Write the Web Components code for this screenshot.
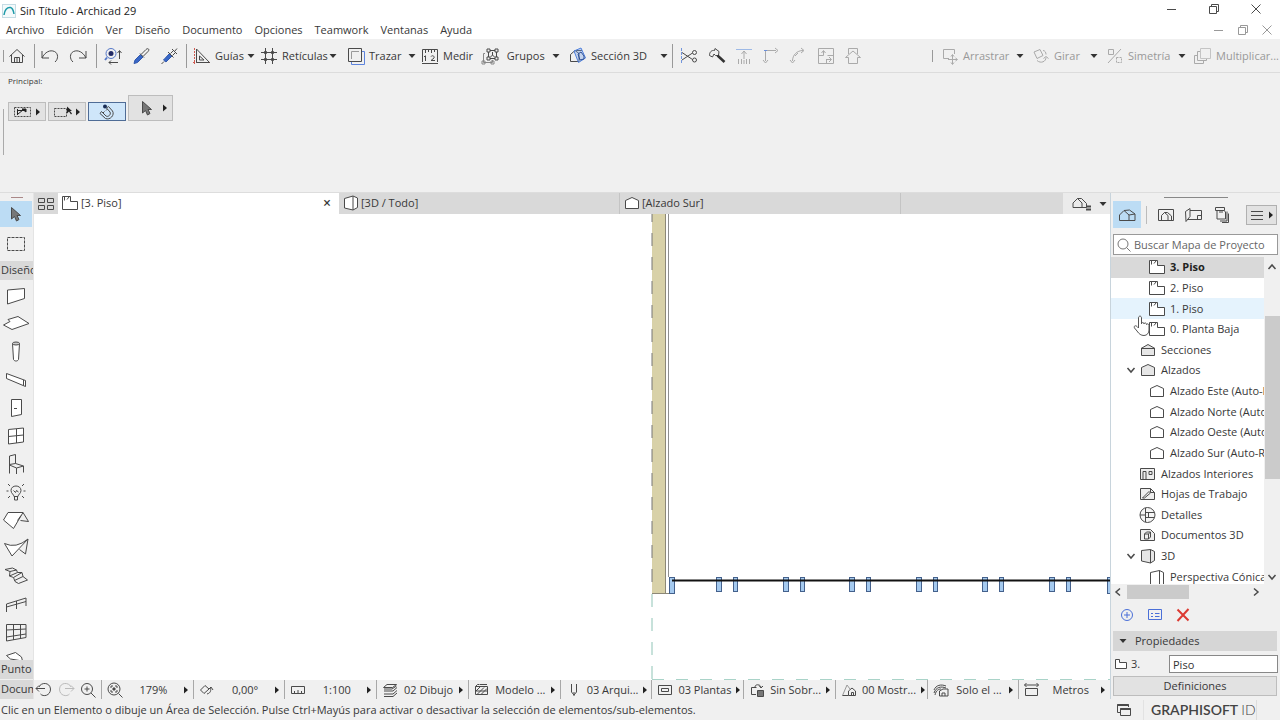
<!DOCTYPE html>
<html lang="es">
<head>
<meta charset="utf-8">
<title>Sin Título - Archicad 29</title>
<style>
  html, body { margin: 0; height: 100%; }
  body {
    font: 11px/16px "Open Sans", "Noto Sans", sans-serif;
    color: #383838;
    background: #f0f0f0;
    --panel: #f0f0f0;
    --bar: #d9d9d9;
    --accent: #bcdcf4;
    --line: #b4b4b4;
    --ink: #4a4a4a;
  }
</style>
</head>
<body>
<ac-app></ac-app>

<script>
/* Icon set: [width, height, svg content] */
const ICONS = {
  logo: [14, 14, '<rect x=".5" y=".5" width="13" height="13" fill="#f4fafb" stroke="#c5dce4"/><path d="M2 11C2.500 6 5 3 8.500 3.500C11 4 11.500 7 12 10" stroke="#1d9aa8" stroke-width="1.500"/>'],
  min: [12, 12, '<path d="M1 6.500h9"/>'],
  restore: [12, 12, '<path d="M1.500 3.500h7v7h-7zM3.500 3.500v-2h7v7h-2"/>'],
  close: [12, 12, '<path d="M1.500 1.500l9 9M10.500 1.500l-9 9"/>'],
  home: [18, 18, '<path d="M1.500 9.500L9 2.500l7.500 7M3.500 8v7.500h11V8M6.500 15.500v-5h5v5M9 10.500v5"/>'],
  undo: [20, 16, '<path d="M2 3v7h7M2 10C5 4 10 1.500 14.500 3.500C18.500 5.500 18.500 11 15 14"/>'],
  redo: [20, 16, '<path d="M18 3v7h-7M18 10C15 4 10 1.500 5.500 3.500C1.500 5.500 1.500 11 5 14"/>'],
  find: [18, 18, '<circle cx="7" cy="6.500" r="5" stroke="#5578c8"/><circle cx="7" cy="6.500" r="2.500" fill="#222b66" stroke="none"/><path d="M3 10.500L1 13" stroke="#5578c8" stroke-width="2"/><path d="M15.500 4v8M13.500 6l2-2.500l2 2.500M5 15.500h9M7 13.500l-2 2l2 2"/>'],
  dropper: [18, 18, '<path d="M2 16.500L3 13L8.500 7.500L11 10L5.500 15.500Z" fill="#3867c7" stroke="#3158ad"/><path d="M8 6.500l4 4M9.500 7L14 2.500C16 .5 18 2.500 16 4.500L11.500 9"/>'],
  syringe: [18, 18, '<path d="M1.500 17L4 14.500" /><path d="M3.500 13L9.500 6.500L12 9L6 15Z" fill="#3867c7" stroke="#3158ad"/><path d="M8 5l5.500 5.500M10.500 6.500l3-3l2 2l-3 3M12 2l5 5M14.500 4.500l2.500-3"/>'],
  guides: [20, 18, '<path d="M2.500 1v16M1 15.500h18" stroke="#cf5a50" stroke-dasharray="2 1"/><path d="M4.500 2v13.500h13ZM7.500 9v4h4.500z"/>'],
  grid: [18, 18, '<path d="M5.500 1v16M12.500 1v16M1 5.500h16M1 12.500h16" stroke-width="1"/><path d="M4 5.500h3M11 5.500h3M4 12.500h3M11 12.500h3M5.500 4v3M5.500 11v3M12.500 4v3M12.500 11v3" stroke-width="2"/>'],
  trace: [18, 18, '<path d="M4.500 15v2.500h13V4.500H15" stroke="#5d83dc"/><path d="M1.500 1.500h13v13h-13z"/><path d="M4.500 12V4.500H12" stroke="#9a9a9a"/>'],
  measure: [18, 16, '<path d="M1.500 14V1.500h15V14M1 15.500h16M4.500 2v3M7.500 2v2M10.500 2v3M13.500 2v2M4.500 8v5M3 9l1.500-1.500M10 8.500c1-1.500 4-.5 3 1.500l-3 2.500h4"/>'],
  group: [20, 18, '<path d="M7.500 3.500h8v8h-8z"/><path d="M4 6.500H2.500v9h9V13" stroke="#888"/><path d="M6 2h3v3H6zM14 2h3v3h-3zM6 10h3v3H6zM14 10h3v3h-3zM11.500 5v3l-2 2M11.500 8l2 2" fill="#f0f0f0"/><path d="M1 14h3v3H1zM10 14h3v3h-3z" stroke="#888"/>'],
  section: [18, 18, '<path d="M1.500 14.500v-7L6 3.500l4 3v8zM6 3.500h7"/><path d="M5 4L12 1L16.500 11L9.500 15.500Z" fill="#6f9fec" fill-opacity=".35" stroke="#4f80dc"/><path d="M9 7l3-2l3 4v3l-4 1z" stroke="#2d4f96"/>'],
  cut: [18, 18, '<path d="M1.500 1v16" stroke="#7295dc" stroke-dasharray="3 1"/><path d="M2 5.500l10.500 7M2 13l10.500-7"/><circle cx="14.500" cy="5.500" r="2"/><circle cx="14.500" cy="13" r="2"/>'],
  axe: [18, 18, '<path d="M1.500 8.500C1.500 5 3.500 3 6.500 3.500L7 1.500L11 4.500L10.500 8.500L7.500 8.500L6 7L4.500 10Z"/><path d="M9.500 8.500l7 6.500" stroke-width="2.500" stroke="#333"/>'],
  adjust: [18, 18, '<path d="M1 2.500h16" stroke="#9db9e6"/><path d="M9 4v8M6.500 7L9 4l2.500 3M3.500 12v5M6.500 12v5M9 13v4M11.500 12v5M14.500 12v5"/>'],
  corner: [18, 18, '<path d="M3.500 14V3.500H14"/><path d="M1 13l2.500 3L6 13M13 1l3 2.500L13 6" /><path d="M2 3.500h3" stroke="#6b90dc"/>'],
  fillet: [18, 18, '<path d="M3.500 14C3.500 8 8 3.500 14 3.500"/><path d="M1 13l2.500 3L6 13M12 1l3 2.500L12 6M6 9l3-3"/>'],
  resize: [18, 18, '<path d="M1.500 1.500h15v15h-15z"/><path d="M6.500 4v4.500H1.500M4.500 6l2-2.500l2 2.500M9 12.500h5M12 10l2.500 2.500L12 15M9.500 16.500v-4M16.500 8.500h-6"/>'],
  house: [18, 18, '<path d="M1.500 10.500L9 4l7.500 6.500h-3v6h-9v-6z"/><path d="M4.500 7V1.500h9V7"/>'],
  drag: [18, 18, '<path d="M8 11.500H2.500v-9h11V7"/><path d="M11.500 8v9M7 12.500h9M10 9.500l1.500-2l1.500 2M10 15.500l1.500 2l1.500-2M14.500 11l2 1.500l-2 1.500"/>'],
  rotate: [18, 18, '<path d="M2 5L8 2.500L11 8.500L5 11.500Z"/><path d="M5 13.500c4 3.500 9 1 9-3M11.500 11.500l2.500-2l2.500 2M11 3.500c2 0 3 2 3 4"/>'],
  mirror: [18, 18, '<path d="M2 16L15 2M2.500 2.500h5v5h-5z"/><path d="M10.500 10.500h5v5h-5z" stroke-dasharray="2 1"/>'],
  multiply: [20, 18, '<path d="M7.500 1.500h10v10h-10z" stroke="#c4c4c4"/><path d="M7 4.500H4.500v9h9V12M4 8.500H1.500v8h9V14"/>'],
  pickA: [20, 12, '<path d="M1.500 1.500h16v9h-16z" stroke-dasharray="2 1"/><path d="M4.500 3v6M4 4.500h9" stroke="#222"/><path d="M5 8l5-4M9 3h4v3z" stroke="#222" fill="#222"/>'],
  pickB: [20, 12, '<path d="M1.500 2.500h12v8h-12z" stroke-dasharray="2 1"/><path d="M14 .5v7l2-2l2 3l1-1l-2-2.500h2z" fill="#222" stroke="none"/>'],
  magnet: [18, 16, '<path d="M3.500 7.500L8 12C10 13.500 13.500 10.500 12 8L8.500 4L10.500 2.500L14.500 7C17 11 12 16.500 7.500 14.500L2 9.500zM8 6.500l1.500-1.500M5 9l1.500-1.500"/><circle cx="7" cy="2.500" r="2" fill="#182c55" stroke="none"/>'],
  arrow: [12, 16, '<path d="M1.500 1.500V13l3-2.500l2 4.500l2.500-1.500l-2-4h3.500z" fill="#777"/>'],
  marquee: [20, 16, '<path d="M1.500 1.500h17v13h-17z" stroke-dasharray="3 1"/>'],
  quad: [18, 14, '<path d="M1.500 1.500h6v4h-6zM10.500 1.500h6v4h-6zM1.500 8.500h6v4h-6zM10.500 8.500h6v4h-6z"/>'],
  story: [18, 16, '<path d="M1.500 1.500h8v5h7v8h-15z" fill="#fff"/><path d="M3.500 2v3.500M6 4.500L8 2"/>'],
  cube: [16, 16, '<path d="M1.500 3.500L10 1l4.500 2v9.500L10 15l-8.500-2zM10 1v14" fill="#fff"/>'],
  elev: [16, 14, '<path d="M1.500 12.500v-8L8 1.500l6.500 3v8z" fill="#fff"/>'],
  elevg: [16, 14, '<path d="M1.500 12.500v-8L8 1.500l6.500 3v8z" fill="#e6e6e6"/>'],
  sect: [16, 14, '<path d="M1.500 12.500v-7h13v7zM1 5.500L8 1.500l7 4z" fill="#e6e6e6"/>'],
  interior: [17, 14, '<path d="M1.500 1.500h14v11h-14z" fill="#eee"/><path d="M4 12V4.500h3V12M10 4.500h3v3h-3z"/>'],
  worksheet: [17, 14, '<path d="M1.500 1.500h10l4 4v7h-14z" fill="#eee"/><path d="M3.500 11L10 4.500l1.500 1.500l-6 5zM11.500 1.500v4h4"/>'],
  detail: [17, 18, '<circle cx="8.500" cy="9" r="7.500" fill="#f4f4f4"/><path d="M6.500 2v14M6.500 6.500H15M6.500 11.500H15M9.500 6.500v5M1 9h5"/>'],
  doc3d: [17, 14, '<path d="M1.500 1.500h10l4 4v7h-14z" fill="#eee"/><path d="M5.500 6v5h4V6zM5.500 6l2-2h4v5l-2 2M9.500 6l2-2"/>'],
  cubeg: [16, 16, '<path d="M1.500 2.500l9-1l4 2v9l-4 2.500l-9-2zM10.500 1.500V15" fill="#e6e6e6"/>'],
  persp: [16, 16, '<path d="M1.500 15V3.500l9-2V15M10.500 1.500l4 2V15" fill="#fff"/>'],
  map: [20, 16, '<path d="M2.500 13.500V8L7 3.500l5 4.500v5.500zM7 3.500L12.500 3L18 7v6.500h-6M12 8l6-1"/>'],
  viewmap: [18, 16, '<path d="M1.500 2.500h15v11h-15z"/><path d="M4.500 13V8.500L7.500 5.500l3.500 3V13M7.500 5.500h3L14.500 9v4"/>'],
  layoutbook: [20, 16, '<path d="M2 14.500L1.500 4.500L6 1.500v8L2 14.500M6 3.500h11.500v9H3.500M13.500 12.500v-4h4"/>'],
  publisher: [18, 18, '<path d="M2.500 1.500h9v3h-9zM4 4.500v8.500h8.500V6L11 4.500M6 6h4M14 5.500v9.500H7M15.500 7.500v9H9"/>'],
  mapset: [22, 16, '<path d="M2 11.500V7l4.500-4.500L11 7v4.500zM6.500 2.500h4l5 5v4H11"/><path d="M15 10.500h5M15 13.500h5" stroke-width="2"/>'],
  lines: [14, 12, '<path d="M1 2.500h12M1 6.500h12M1 10.500h12"/>'],
  search: [14, 14, '<circle cx="6" cy="6" r="5"/><path d="M9.500 9.500l4 4"/>'],
  chevron: [10, 8, '<path d="M1.500 2l3.500 4l3.500-4" stroke-width="1.500"/>'],
  up: [10, 8, '<path d="M1.500 6L5 2l3.500 4" stroke-width="1.500"/>'],
  left: [8, 10, '<path d="M6 1.500L2 5l4 3.500" stroke-width="1.500"/>'],
  right: [8, 10, '<path d="M2 1.500L6 5L2 8.500" stroke-width="1.500"/>'],
  plus: [14, 14, '<circle cx="7" cy="7" r="5.500" stroke="#4a6fd8"/><path d="M7 4v6M4 7h6" stroke="#4a6fd8"/>'],
  props: [16, 14, '<path d="M1.500 1.500h13v10h-13zM4 5.500h2M8 5.500h4.500M4 8.500h2M8 8.500h4.500" stroke="#4a6fd8"/>'],
  del: [14, 14, '<path d="M1.500 1.500l11 11M12.500 1l-11 12" stroke="#dc3a32" stroke-width="2"/>'],
  folder: [14, 12, '<path d="M1.500 1.500h4v3h7v6h-11z" fill="#fff"/>'],
  windows: [18, 14, '<path d="M5 9.500H2.500v-8h11V4" /><path d="M5.500 5.500h10v7h-10z" fill="#f0f0f0"/><path d="M2.500 2h11M5.500 6h10" stroke-width="2"/>'],
  dot: [6, 8, '<path d="M1 .5v7l4-3.500z" fill="#222" stroke="none"/>'],
  drop: [8, 6, '<path d="M.5 1h7L4 5z" fill="#333" stroke="none"/>'],
  wall: [28, 24, '<path d="M5.500 6L22.500 4.500v10L5.500 20z" fill="#fff"/>'],
  slab: [28, 24, '<path d="M1.500 13L8 9.500l-2-2L16 4.500l11 7L10 17.500z" fill="#fff"/>'],
  column: [28, 24, '<path d="M10.500 3.500l1 16c1 2 4 2 5 0l1-16" fill="#fff"/><ellipse cx="14" cy="3.500" rx="3.500" ry="1.500" fill="#ccc"/>'],
  beam: [28, 24, '<path d="M4.500 5.500L23.500 12.500v6L4.500 10.500zM21.500 12v5.500" fill="#fff"/>'],
  door: [28, 24, '<path d="M9.500 3.500h10v15l-10 2z" fill="#fff"/><path d="M12 12.500h3"/>'],
  window: [28, 24, '<path d="M6.500 5.500L21.500 4v14L6.500 20zM14.500 5v14M6.500 12.500L21.500 11" fill="#fff"/>'],
  chair: [28, 24, '<path d="M7.500 21.500V4l6-1.500v9M7.500 12.500l6-1L21.500 14v6.500M7.500 13l7 3l7-2M14.500 16v6"/>'],
  lamp: [28, 24, '<path d="M12 16.500c0-2-3-3-3-6c0-6 10-6 10 0c0 3-3 4-3 6zM12.500 17v3h3v-3M11.500 10.500l2 2l1-2l2 1.500M6 4l2 2M22 4l-2 2M4.500 11h2M21.500 11h2M6 18l2-2M22 18l-2-2"/>'],
  roof: [28, 24, '<path d="M1.500 12L6 4.500h15L11.500 20.500z" fill="#fff"/><path d="M21 4.500l5.500 9l-8-1M19 7.500l-3.500 5"/>'],
  shell: [28, 24, '<path d="M2.500 7.500Q14 13 26 3L10 20z" fill="#fff"/><path d="M26 3L23.500 18L17.500 13.500"/>'],
  stair: [28, 24, '<path d="M3 5.500l7.500-1.500l4 2l1 2.500h4.500l1 4l4.500 3.500l-9 3.500l-3.500-2l-1.500-4l-4-1.500l.5-4.500zM8 7.500l6.500-1.500M7.500 12l8-3.500M11.500 13.500l8.500-5M12.500 16.500l8.500-4"/>'],
  rail: [28, 24, '<path d="M4.500 20v-8L24 6v8M4.500 15L24 9.500M14.500 9v8"/>'],
  curtain: [28, 24, '<path d="M4.500 4.500H24v13L4.500 21zM4.500 10L24 9M4.500 17L24 14M11.500 5v15M18.500 5v14"/>'],
  morph: [28, 24, '<path d="M4.500 7.500l9-3l6 4.500l1 4l-12-2z" fill="#fff"/>'],
  zback: [18, 18, '<path d="M1 7.500h9M4 4.500l-3 3l3 3M4 6C6 1 15 1 15.500 8C15.500 15 8 16 5.500 13"/>'],
  znext: [18, 18, '<path d="M17 7.500H8M14 4.500l3 3l-3 3M14 6C12 1 3 1 2.500 8C2.500 15 10 16 12.500 13"/>'],
  zin: [18, 18, '<circle cx="8" cy="8" r="5.500"/><path d="M8 5.500v5M5.500 8h5M12 12l4.500 4.500"/>'],
  zfit: [18, 18, '<circle cx="8" cy="8" r="6"/><path d="M5 7V5h2M9 5h2v2M11 9v2H9M7 11H5V9M12.500 12.500l4 4"/><path d="M7 7h2v2H7z" fill="#444"/>'],
  orient: [16, 14, '<path d="M1.500 7L6 2.500L10 6L5 10.500zM8 11c4-1 4-4 3.500-6M9.500 6.500L12 4l2 3"/>'],
  scale: [16, 12, '<path d="M1.500 2.500h13v7h-13zM4.500 7v2M8 6v3M11.500 7v2"/>'],
  layers: [16, 16, '<path d="M5 2.500h9.500l-4 3H1.500zM2 9l9 0l4-3.500M2 12h9l4-3.500M2 14.500h9l4-3.500M2 7h8l4.500-3"/>'],
  hatch: [16, 14, '<path d="M1.500 3.500h12v8h-12zM1.500 3.500l2-2h2M6 1.500h7M2 8l4-4M3 11.500l7-7M7 11.500l6-6M2 8h11"/>'],
  pen: [12, 16, '<path d="M3.500 2v8l2.500 3l2.500-3V2M6 10v4"/>'],
  frame: [16, 12, '<path d="M1.500 1.500h13v9h-13zM4.500 4.500h7v3h-7z"/>'],
  override: [16, 16, '<path d="M7 12.500H2.500v-7h5M6 5c0-3 5-3 6 0M10 3.500L12 6l2-2"/><path d="M8.500 8.500h6v6h-6z" fill="#777"/>'],
  reno: [16, 16, '<path d="M1.500 13.500L6 3l3 4" stroke="#999"/><path d="M1.500 13.500h6M7.500 13.500V9l3.500-3l3.500 3v4.500zM10.500 13.500v-3h2v3"/>'],
  design: [18, 16, '<path d="M2 8C4 3 9 2 14 4M2 11C4 5 9 4 14 6M3 13C4 8 7 7 9 7"/><path d="M7.500 14V9L11 7h5v7zM10 14v-3h3v3"/>'],
  units: [18, 16, '<path d="M2.500 6.500h12v7h-12zM1.500 3h14M3.500 1l-2 2l2 2M13.500 1l2 2l-2 2"/>'],
  hand: [18, 22, '<path d="M5.500 13V3c0-2.500 3-2.500 3 0v6c0-2 2.500-2 2.500 0c0-1.500 2.500-1.500 2.500.5c0-1 2.500-1 2.500 1V15c0 3-2 5.500-5 5.500S6 19 4 16L1.500 13c-1-2 1-3 2.500-1.500z" fill="#fff" stroke="#555"/>']
};

/* Base element: renders its shadow markup once it is attached */
class Part extends HTMLElement {
  connectedCallback() {
    if (this.shadowRoot) return;
    this.attachShadow({ mode: 'open' }).innerHTML =
      `<style>*{box-sizing:border-box}
        button{font:inherit;color:inherit;background:none;border:0;padding:0;margin:0;white-space:nowrap}
        :host{display:block}${this.css()}</style>${this.html()}`;
  }
  css() { return ''; }
  html() { return '<slot></slot>'; }
  at(name) { return this.getAttribute(name) || ''; }
}

customElements.define('ac-icon', class extends Part {
  css() {
    return ':host{display:inline-block;flex:none;color:var(--icon,var(--ink))} svg{display:block}';
  }
  html() {
    const [w, h, body] = ICONS[this.at('name')];
    return `<svg width="${w}" height="${h}" viewBox="0 0 ${w} ${h}" fill="none" stroke="currentColor" aria-hidden="true">${body}</svg>`;
  }
});

customElements.define('ac-titlebar', class extends Part {
  css() {
    return `:host{background:#fff;color:#222}
      header{display:flex;align-items:center;height:21px;padding:0 18px 0 2px;gap:4px}
      h1{font:inherit;margin:0;flex:1}
      .win{display:flex;gap:30px}`;
  }
  html() {
    return `<header><ac-icon name="logo"></ac-icon><h1>Sin Título - Archicad 29</h1>
      <div class="win">${['min:Minimizar', 'restore:Restaurar', 'close:Cerrar'].map(s => {
        const [i, l] = s.split(':');
        return `<button aria-label="${l}"><ac-icon name="${i}"></ac-icon></button>`;
      }).join('')}</div></header>`;
  }
});

customElements.define('ac-menubar', class extends Part {
  css() {
    return `:host{background:#fff}
      nav{display:flex;align-items:center;height:18px;padding:0 7px 0 6px;gap:12px}
      .win{display:flex;gap:12px;margin-left:auto;--icon:#999}
      .win button{display:flex}`;
  }
  html() {
    return `<nav>${['Archivo', 'Edición', 'Ver', 'Diseño', 'Documento', 'Opciones', 'Teamwork', 'Ventanas', 'Ayuda']
      .map(m => `<button>${m}</button>`).join('')}
      <div class="win"><button aria-label="Minimizar ventana"><ac-icon name="min"></ac-icon></button>
      <button aria-label="Restaurar ventana"><ac-icon name="restore"></ac-icon></button>
      <button aria-label="Cerrar ventana"><ac-icon name="close"></ac-icon></button></div></nav>`;
  }
});

/* Toolbar command: icon, optional text, optional drop-down mark */
customElements.define('ac-tool', class extends Part {
  css() {
    return `:host{flex:none;width:var(--w,28px)}
      :host([off]){color:#999;--icon:#aaa}
      button{display:flex;align-items:center;width:100%;height:24px}
      .pic{display:flex;justify-content:center;width:26px;flex:none}
      .text{flex:1;text-align:left}
      .drop{padding-right:1px}
      :host([off]) .drop{padding-right:4px}`;
  }
  html() {
    const drop = this.hasAttribute('drop') ? '<ac-icon class="drop" name="drop"></ac-icon>' : '';
    return `<button aria-label="${this.at('label')}"><span class="pic"><ac-icon name="${this.at('icon')}"></ac-icon></span><span class="text"><slot></slot></span>${drop}</button>`;
  }
});

customElements.define('ac-toolbar', class extends Part {
  css() {
    return `:host{background:var(--panel);border-bottom:1px solid #dcdcdc}
      div{display:flex;align-items:center;height:33px;padding-left:3px}
      i{flex:none;width:1px;height:24px;background:#999}
      i.short{height:12px}
      .right{margin-left:auto}
      .m{--w:82px}.a{--w:67px}.g{--w:83px}.s{--w:104px}.t{--w:61px}.n{--w:74px}`;
  }
  html() {
    return `<div><i class="short"></i>
      <ac-tool icon="home" label="Inicio"></ac-tool><i style="margin:0 2px"></i>
      <ac-tool icon="undo" label="Deshacer"></ac-tool><ac-tool icon="redo" label="Rehacer"></ac-tool><i style="margin:0 3px"></i>
      <ac-tool icon="find" label="Buscar y seleccionar"></ac-tool><ac-tool icon="dropper" label="Recoger parámetros"></ac-tool><ac-tool icon="syringe" label="Inyectar parámetros"></ac-tool><i style="margin:0 2px"></i>
      <ac-tool class="a" icon="guides" label="Guías" drop>Guías</ac-tool>
      <ac-tool class="m" icon="grid" label="Retículas" drop>Retículas</ac-tool>
      <span style="width:5px"></span>
      <ac-tool class="n" icon="trace" label="Trazar" drop>Trazar</ac-tool>
      <ac-tool class="t" icon="measure" label="Medir">Medir</ac-tool>
      <ac-tool class="g" icon="group" label="Grupos" drop>&nbsp;Grupos</ac-tool>
      <span style="width:4px"></span>
      <ac-tool class="s" icon="section" label="Sección 3D" drop>Sección 3D</ac-tool><i style="margin:0 3px"></i>
      <ac-tool icon="cut" label="Dividir"></ac-tool>
      <ac-tool style="--w:27px" icon="axe" label="Ajustar"></ac-tool>
      <ac-tool off style="--w:27px" icon="adjust" label="Ajustar altura"></ac-tool>
      <ac-tool off style="--w:27px" icon="corner" label="Intersecar"></ac-tool>
      <ac-tool off icon="fillet" label="Empalme"></ac-tool>
      <ac-tool off style="--w:27px" icon="resize" label="Redimensionar"></ac-tool>
      <ac-tool off icon="house" label="Cubierta"></ac-tool>
      <i class="short right" style="margin-right:4px"></i>
      <ac-tool off style="--w:91px" icon="drag" label="Arrastrar" drop>Arrastrar</ac-tool>
      <ac-tool off class="n" icon="rotate" label="Girar" drop>Girar</ac-tool>
      <ac-tool off style="--w:88px" icon="mirror" label="Simetría" drop>Simetría</ac-tool>
      <ac-tool off style="--w:90px" icon="multiply" label="Multiplicar">Multiplicar...</ac-tool></div>`;
  }
});

customElements.define('ac-infobox', class extends Part {
  css() {
    return `:host{background:var(--panel);border-bottom:1px solid #ddd;height:120px;padding:0 8px}
      .title{font-size:8px;line-height:12px;padding:2px 0 8px}
      .row{display:flex;align-items:flex-end;gap:2px}
      button{display:flex;align-items:center;justify-content:space-between;width:38px;height:19px;padding:0 4px;
        background:#e2e2e2;border:1px solid #bdbdbd}
      .on{background:#cfe6fa;border-color:#4f6c96;justify-content:center}
      .big{width:45px;height:26px;padding-left:12px}
      .grip{width:1px;height:46px;background:#aaa;margin:-12px 0 0 -5px}`;
  }
  html() {
    return `<div class="title">Principal:</div>
      <div class="row"><button aria-label="Método de selección"><ac-icon name="pickA"></ac-icon><ac-icon name="dot"></ac-icon></button>
      <button aria-label="Área de selección"><ac-icon name="pickB"></ac-icon><ac-icon name="dot"></ac-icon></button>
      <button class="on" aria-label="Selección rápida" aria-pressed="true"><ac-icon name="magnet"></ac-icon></button>
      <button class="big" aria-label="Flecha"><ac-icon name="arrow"></ac-icon><ac-icon name="dot"></ac-icon></button></div>
      <div class="grip"></div>`;
  }
});

customElements.define('ac-toolbox', class extends Part {
  css() {
    return `:host{display:flex;flex-direction:column;width:34px;background:var(--panel);border-right:1px solid #e4e4e4;min-height:0}
      .grip{flex:none;width:12px;height:1px;margin:4px auto 3px;background:#a88}
      button{display:flex;flex:none;align-items:center;justify-content:center;width:32px;height:28px}
      .on{background:var(--accent);height:26px}
      .marquee{height:34px}
      .list{flex:1 1 0;min-height:0;overflow:hidden;padding-top:2px}
      h2{flex:none;font:inherit;margin:0;padding:1px;height:19px;overflow:hidden;white-space:nowrap;background:var(--bar)}
      h2+h2{margin-top:1px}`;
  }
  html() {
    const tools = { wall: 'Muro', slab: 'Forjado', column: 'Pilar', beam: 'Viga', door: 'Puerta', window: 'Ventana', chair: 'Objeto', lamp: 'Lámpara', roof: 'Cubierta', shell: 'Membrana', stair: 'Escalera', rail: 'Barandilla', curtain: 'Muro cortina', morph: 'Forma' };
    return `<div class="grip"></div>
      <button class="on" aria-label="Flecha"><ac-icon name="arrow"></ac-icon></button>
      <button class="marquee" aria-label="Área de selección"><ac-icon name="marquee"></ac-icon></button>
      <h2>Diseño</h2>
      <div class="list">${Object.entries(tools).map(([i, l]) => `<button aria-label="${l}"><ac-icon name="${i}"></ac-icon></button>`).join('')}</div>
      <h2>Punto</h2><h2>Docum</h2>`;
  }
});

customElements.define('ac-tabs', class extends Part {
  css() {
    return `:host{display:flex;height:21px;background:var(--bar)}
      .all{width:24px;display:flex;align-items:center;justify-content:center}
      .tab{display:flex;align-items:center;flex:0 1 281px;gap:2px;padding:0 8px 1px 4px;border-right:1px solid #c4c4c4}
      .tab.on{background:#fff;border:0;padding-left:3px}
      .tab b{margin-left:auto;font-size:14px;font-weight:600}
      .opt{margin-left:auto;width:47px;display:flex;align-items:center;justify-content:space-between;padding:0 3px 0 8px;background:#ebebeb}`;
  }
  html() {
    return `<button class="all" aria-label="Vista general de pestañas"><ac-icon name="quad"></ac-icon></button>
      <button class="tab on"><ac-icon name="story"></ac-icon><span>[3. Piso]</span><b>×</b></button>
      <button class="tab"><ac-icon name="cube"></ac-icon><span>[3D / Todo]</span></button>
      <button class="tab"><ac-icon name="elev"></ac-icon><span>[Alzado Sur]</span></button>
      <button class="opt" aria-label="Opciones de vista"><ac-icon name="mapset"></ac-icon><ac-icon name="drop"></ac-icon></button>`;
  }
});

/* Floor plan drawing */
customElements.define('ac-plan', class extends Part {
  css() { return ':host{background:#fff;overflow:hidden} svg{display:block;width:100%;height:100%}'; }
  html() {
    const posts = [];
    for (let i = 0; i < 6; i++) {
      const x = 682.5 + Math.round(i * 66.6);
      posts.push(`<rect x="${x}" y="363.500" width="5" height="14"/><rect x="${x + 17}" y="363.500" width="4" height="14"/>`);
    }
    return `<svg role="img" aria-label="Planta del piso 3">
      <rect x="618" y="0" width="14" height="379" fill="#d8d1a8"/>
      <path d="M631.500 0V379" stroke="#8c8877"/><path d="M634.500 0V363" stroke="#8f8f8f"/>
      <path d="M618 379.500H640" stroke="#8c8877"/>
      <path d="M618 0V379" stroke="#777" stroke-dasharray="13 11" stroke-dashoffset="5"/>
      <path d="M618 380V466" stroke="#8fc4b6" stroke-dasharray="13 11"/>
      <path d="M618 465.500H2000" stroke="#a9d3c8" stroke-dasharray="12 12"/>
      <g fill="#a5caef" stroke="#44618c">
        <rect x="635.500" y="363.500" width="5" height="16"/>${posts.join('')}
        <rect x="1073.500" y="363.500" width="6" height="16"/></g>
      <path d="M638 366.500H1076" stroke="#111" stroke-width="2"/>
    </svg>`;
  }
});

customElements.define('ac-option', class extends Part {
  css() {
    return `:host{flex:1 1 0;min-width:0;border-left:1px solid #a8a8a8}
      button{display:grid;grid-template-columns:26px 1fr 14px;align-items:center;justify-items:center;width:100%;height:19px}`;
  }
  html() {
    return `<button><ac-icon name="${this.at('icon')}"></ac-icon><span><slot></slot></span><ac-icon name="dot"></ac-icon></button>`;
  }
});

customElements.define('ac-quickbar', class extends Part {
  css() {
    return `:host{display:flex;align-items:center;height:19px;background:var(--panel)}
      .zoom{display:flex;flex:none;width:67px;gap:4px;padding-left:1px}
      .zoom button{display:flex}
      .dim{--icon:#bbb}`;
  }
  html() {
    const opts = [['zfit', '179%'], ['orient', '0,00°'], ['scale', '1:100'], ['layers', '02 Dibujo'], ['hatch', 'Modelo ...'], ['pen', '03 Arqui...'], ['frame', '03 Plantas'], ['override', 'Sin Sobr...'], ['reno', '00 Mostr...'], ['design', 'Solo el ...'], ['units', 'Metros']];
    return `<div class="zoom"><button aria-label="Zoom anterior"><ac-icon name="zback"></ac-icon></button>
      <button class="dim" aria-label="Zoom siguiente"><ac-icon name="znext"></ac-icon></button>
      <button aria-label="Aumentar"><ac-icon name="zin"></ac-icon></button></div>
      ${opts.map(([i, t]) => `<ac-option icon="${i}">${t}</ac-option>`).join('')}`;
  }
});

customElements.define('ac-node', class extends Part {
  css() {
    return `:host{display:flex;align-items:center;padding-left:28px;white-space:nowrap;overflow:hidden;min-height:0}
      :host([deep]){padding-left:37px}
      :host([open]){padding-left:15px}
      :host([current]){background:var(--bar);font-weight:700;color:#222}
      :host([hover]){background:#e5f3fd}
      .open{width:13px;display:flex}
      .pic{display:flex;flex:none;width:17px;margin-right:5px;justify-content:center}`;
  }
  html() {
    return `${this.hasAttribute('open') ? '<span class="open"><ac-icon name="chevron"></ac-icon></span>' : ''}
      <span class="pic"><ac-icon name="${this.at('icon')}"></ac-icon></span><span><slot></slot></span>`;
  }
});

customElements.define('ac-tree', class extends Part {
  css() {
    return `:host{display:grid;grid-template:1fr 15px / 1fr 16px;min-height:0;position:relative}
      .view{overflow:hidden;background:#fff;min-height:0}
      .nodes{display:grid;grid-auto-rows:1fr;height:330px}
      .v{display:flex;flex-direction:column;align-items:center;padding:6px 0 3px}
      .v span{width:15px;height:163px;background:#cbcbcb;margin:45px 0 auto 1px}
      .h{display:flex;align-items:center;padding:0 4px 0 3px;gap:5px}
      .h span{width:62px;height:14px;background:#cbcbcb;margin-right:auto}
      .cursor{position:absolute;left:22px;top:58px}`;
  }
  html() {
    const n = [['story', '3. Piso', 'deep current'], ['story', '2. Piso', 'deep'], ['story', '1. Piso', 'deep hover'], ['story', '0. Planta Baja', 'deep'],
      ['sect', 'Secciones', ''], ['elevg', 'Alzados', 'open'],
      ['elev', 'Alzado Este (Auto-R', 'deep'], ['elev', 'Alzado Norte (Auto', 'deep'], ['elev', 'Alzado Oeste (Auto', 'deep'], ['elev', 'Alzado Sur (Auto-Re', 'deep'],
      ['interior', 'Alzados Interiores', ''], ['worksheet', 'Hojas de Trabajo', ''], ['detail', 'Detalles', ''], ['doc3d', 'Documentos 3D', ''],
      ['cubeg', '3D', 'open'], ['persp', 'Perspectiva Cónica', 'deep']];
    return `<div class="view"><div class="nodes" role="tree">${n.map(([i, t, a]) => `<ac-node role="treeitem" icon="${i}" ${a}>${t}</ac-node>`).join('')}</div></div>
      <div class="v"><ac-icon name="up"></ac-icon><span></span><ac-icon name="chevron"></ac-icon></div>
      <div class="h"><ac-icon name="left"></ac-icon><span></span><ac-icon name="right"></ac-icon></div>
      <ac-icon class="cursor" name="hand"></ac-icon>`;
  }
});

customElements.define('ac-navigator', class extends Part {
  css() {
    return `:host{display:flex;flex-direction:column;width:170px;background:var(--panel);border-left:1px solid #c8d4dc;min-height:0}
      .grip{flex:none;width:64px;height:1px;margin:4px auto 3px;background:#888}
      .modes{display:flex;flex:none;align-items:center;height:27px;padding:0 3px 0 2px}
      .modes button{display:flex;align-items:center;justify-content:center;width:28px;height:27px}
      .modes .on{background:var(--accent)}
      .modes i{width:1px;height:18px;margin:0 5px;background:#bbb}
      .modes .menu{width:31px;height:20px;margin-left:auto;gap:4px;background:#e2e2e2;border:1px solid #b0b0b0}
      .search{display:flex;flex:none;align-items:center;gap:3px;height:21px;margin:6px 2px 2px 2px;padding-left:3px;background:#fff;border:1px solid #999;--icon:#777}
      input{font:inherit;color:#333;background:#fff;border:0;padding:0;margin:0;min-width:0;outline:0}
      input::placeholder{color:#666;opacity:1}
      .search input{flex:1}
      ac-tree{flex:1 1 0}
      .acts{display:flex;flex:none;gap:14px;align-items:center;height:32px;padding-left:9px}
      .acts button{width:14px;display:flex;justify-content:center}
      h2{flex:none;display:flex;align-items:center;gap:8px;font:inherit;height:20px;margin:0 3px 0 2px;padding-left:6px;background:#d6d6d6}
      .field{display:flex;flex:none;align-items:center;gap:3px;height:18px;margin:4px 2px 3px 3px}
      .field input{margin-left:auto;width:109px;height:18px;padding-left:3px;border:1px solid #888}
      .def{flex:none;height:20px;margin:0 3px 3px 2px;background:#e2e2e2;border:1px solid #bdbdbd;line-height:18px}`;
  }
  html() {
    return `<div class="grip"></div>
      <div class="modes"><button class="on" aria-label="Mapa de Proyecto"><ac-icon name="map"></ac-icon></button><i></i>
      <button aria-label="Mapa de Vistas"><ac-icon name="viewmap"></ac-icon></button>
      <button aria-label="Libro de Planos"><ac-icon name="layoutbook"></ac-icon></button>
      <button aria-label="Publicador"><ac-icon name="publisher"></ac-icon></button>
      <button class="menu" aria-label="Menú del navegador"><ac-icon name="lines"></ac-icon><ac-icon name="dot"></ac-icon></button></div>
      <label class="search"><ac-icon name="search"></ac-icon><input type="text" aria-label="Buscar Mapa de Proyecto" placeholder="Buscar Mapa de Proyecto"></label>
      <ac-tree></ac-tree>
      <div class="acts"><button aria-label="Nuevo"><ac-icon name="plus"></ac-icon></button><button aria-label="Parámetros"><ac-icon name="props"></ac-icon></button><button aria-label="Borrar"><ac-icon name="del"></ac-icon></button></div>
      <h2><ac-icon name="drop"></ac-icon>Propiedades</h2>
      <label class="field"><ac-icon name="folder"></ac-icon>3.<input type="text" value="Piso"></label>
      <button class="def">Definiciones</button>`;
  }
});

customElements.define('ac-statusbar', class extends Part {
  css() {
    return `:host{background:var(--panel)}
      footer{display:flex;align-items:center;height:21px;padding-left:1px}
      p{margin:0;flex:1;white-space:nowrap}
      .id{display:flex;flex:none;align-items:center;width:165px;height:21px}
      .brand{font:600 14px/20px Lato,sans-serif;color:#444;padding-left:7px;margin-left:10px;border-left:1px solid #e2e2e2;flex:1;white-space:nowrap}
      .brand span{font-weight:300}
      i{width:1px;height:20px;margin-right:23px;background:#ddd}`;
  }
  html() {
    return `<footer><p>Clic en un Elemento o dibuje un Área de Selección. Pulse Ctrl+Mayús para activar o desactivar la selección de elementos/sub-elementos.</p>
      <div class="id"><ac-icon name="windows"></ac-icon><div class="brand">GRAPHISOFT <span>ID</span></div><i></i></div></footer>`;
  }
});

customElements.define('ac-app', class extends Part {
  css() {
    return `:host{display:flex;flex-direction:column;height:100vh;overflow:hidden}
      ac-titlebar,ac-menubar,ac-toolbar,ac-infobox,ac-statusbar{flex:none}
      main{flex:1 1 0;display:grid;grid-template-columns:auto 1fr auto;grid-template-rows:minmax(0,1fr);min-height:0}
      section{display:flex;flex-direction:column;min-width:0;min-height:0}
      ac-tabs,ac-quickbar{flex:none}
      ac-plan{flex:1 1 0;min-height:0}`;
  }
  html() {
    return `<ac-titlebar></ac-titlebar><ac-menubar></ac-menubar><ac-toolbar></ac-toolbar><ac-infobox></ac-infobox>
      <main><ac-toolbox></ac-toolbox>
      <section><ac-tabs></ac-tabs><ac-plan></ac-plan><ac-quickbar></ac-quickbar></section>
      <ac-navigator></ac-navigator></main>
      <ac-statusbar></ac-statusbar>`;
  }
});
</script>
</body>
</html>
